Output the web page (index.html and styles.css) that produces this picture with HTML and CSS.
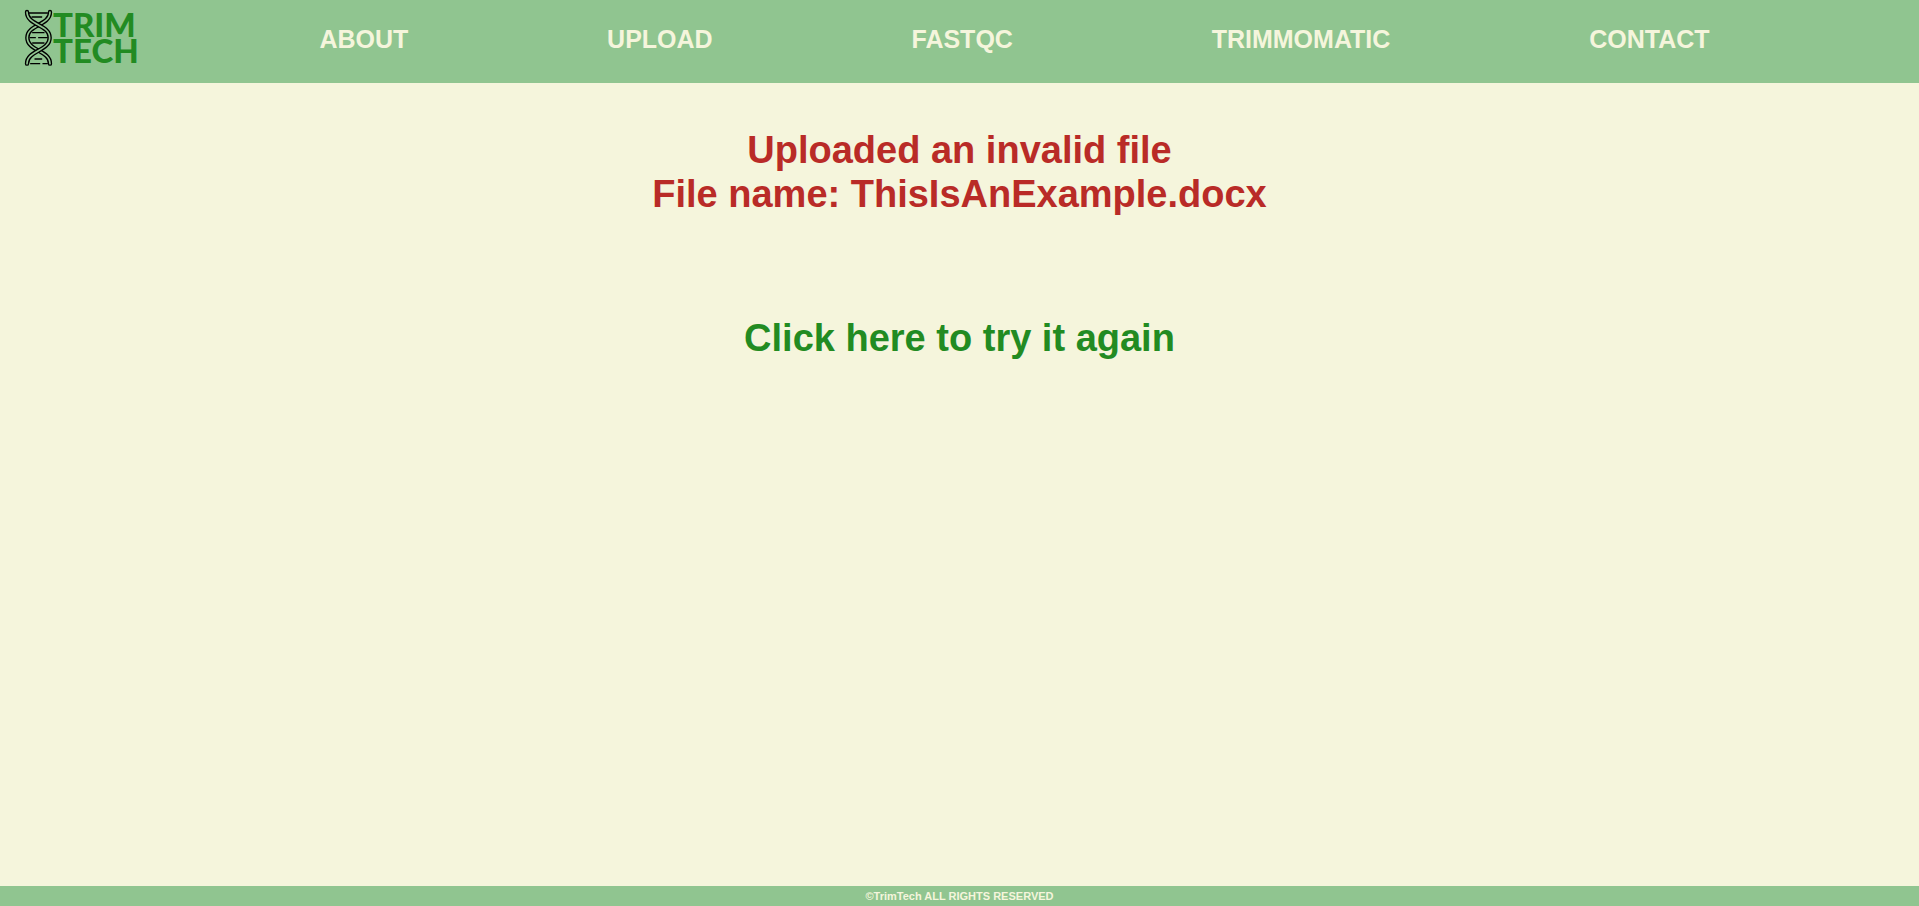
FILE: index.html
```html
<!DOCTYPE html>
<html lang="en">
<head>
<meta charset="utf-8">
<title>TrimTech</title>
<link rel="stylesheet" href="styles.css">
</head>
<body>
<header class="header">
  <a class="logo" href="#" aria-label="TrimTech home">
    <svg class="logo-helix" viewBox="72 26 87 174" aria-hidden="true">
      <g class="rungs">
        <path d="M88 38H142M96 50H125M98 97H132M90 112H106M116 112H142M98 128H132M105 176H125M92 190H119M129 190H142"/>
      </g>
      <path class="strand-edge" d="M150 35C150 76 82 72 82 112S150 150 150 190"/>
      <path class="strand-core" d="M150 35C150 76 82 72 82 112S150 150 150 190"/>
      <path class="strand-edge" d="M81 35C81 76 149 72 149 112S81 150 81 190"/>
      <path class="strand-core" d="M81 35C81 76 149 72 149 112S81 150 81 190"/>
    </svg>
    <span class="logo-text"><span>TRIM</span><span>TECH</span></span>
  </a>
  <nav class="nav">
    <a href="#">ABOUT</a>
    <a href="#">UPLOAD</a>
    <a href="#">FASTQC</a>
    <a href="#">TRIMMOMATIC</a>
    <a href="#">CONTACT</a>
  </nav>
</header>
<main class="main">
  <h1 class="error">Uploaded an invalid file<br>File name: ThisIsAnExample.docx</h1>
  <a class="retry" href="#">Click here to try it again</a>
</main>
<footer class="footer">©TrimTech ALL RIGHTS RESERVED</footer>
</body>
</html>
```
FILE: styles.css
```css
* {
  box-sizing: border-box;
}

body {
  display: flex;
  flex-direction: column;
  min-height: 100vh;
  margin: 0;
  background: beige;
  font-family: Arial, "Liberation Sans", sans-serif;
  font-weight: bold;
}

a {
  color: inherit;
  text-decoration: none;
}

.header {
  display: flex;
  align-items: flex-start;
  padding: 9px 110px 16px 24px;
  background: #90c590;
}

.logo {
  display: flex;
  width: 196px;
  color: forestgreen;
}

.logo-helix {
  width: 29px;
  height: 58px;
  fill: none;
  stroke-linecap: round;
}

.rungs {
  stroke: #000;
  stroke-width: 4;
}

.strand-edge {
  stroke: #000;
  stroke-width: 13;
}

.strand-core {
  stroke: #90c590;
  stroke-width: 5;
}

.logo-text {
  display: flex;
  flex-direction: column;
  padding-top: 2px;
  font-family: Lato, sans-serif;
  font-size: 33px;
  font-weight: 900;
  line-height: 26px;
}

.nav {
  display: flex;
  flex: 1;
  justify-content: space-around;
  padding-top: 16px;
  color: beige;
  font-size: 25px;
  line-height: 28px;
}

.main {
  display: flex;
  flex: 1;
  flex-direction: column;
  align-items: center;
  gap: 100px;
  padding: 45px 16px;
  font-size: 38px;
  line-height: 44px;
  text-align: center;
}

.error {
  margin: 0;
  color: #b92b27;
  font-size: inherit;
}

.retry {
  color: forestgreen;
}

.footer {
  padding-top: 1px;
  color: beige;
  background: #90c590;
  font-size: 11px;
  line-height: 19px;
  text-align: center;
}
```
